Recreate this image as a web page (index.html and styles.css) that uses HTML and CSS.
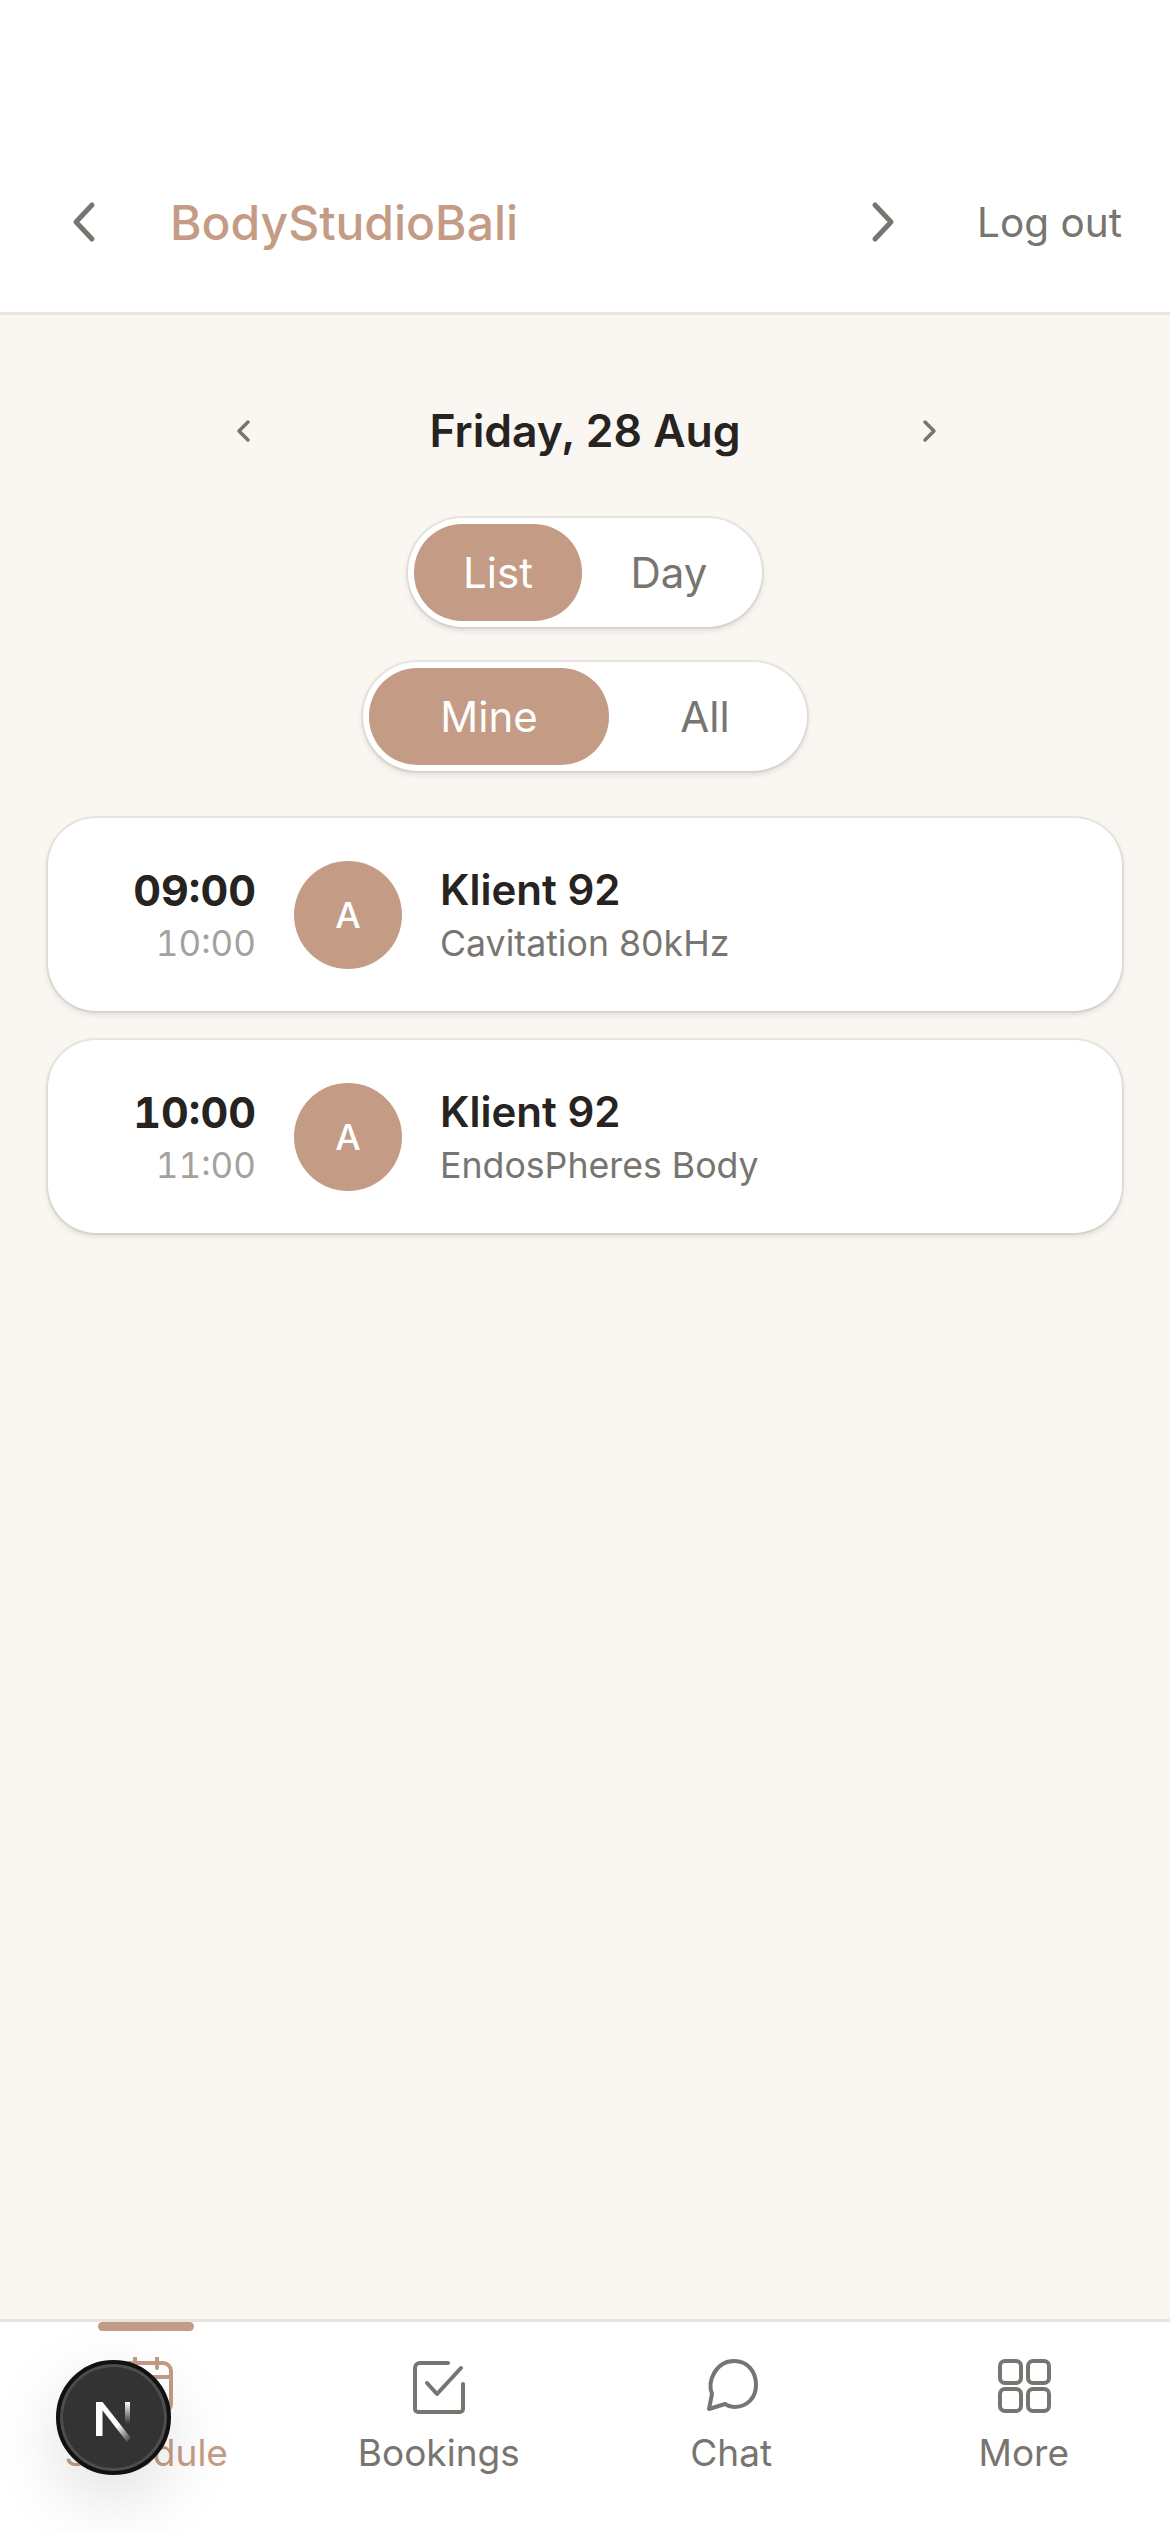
FILE: index.html
```html
<!DOCTYPE html>
<html>
<head>
    <link rel="stylesheet" href="styles.css">
</head>
<body>
    <div class="app">
        <header class="topbar">
            <button class="topbar-arrow">
                <svg width="30" height="42" viewBox="0 0 30 42"><path d="M23 4 7 21l16 17"/></svg>
            </button>
            <div class="brand">BodyStudioBali</div>
            <button class="topbar-arrow">
                <svg width="30" height="42" viewBox="0 0 30 42"><path d="M7 4l16 17L7 38"/></svg>
            </button>
            <a class="logout">Log out</a>
        </header>

        <main class="content">
            <div class="date-row">
                <svg class="date-arrow" width="20" height="26" viewBox="0 0 20 26"><path d="M17 4 8 13l9 9"/></svg>
                <div class="date-label">Friday, 28 Aug</div>
                <svg class="date-arrow" width="20" height="26" viewBox="0 0 20 26"><path d="M6 4l9 9-9 9"/></svg>
            </div>

            <div class="toggle">
                <div class="toggle-item toggle-list active">List</div>
                <div class="toggle-item toggle-day">Day</div>
            </div>
            <div class="toggle">
                <div class="toggle-item toggle-mine active">Mine</div>
                <div class="toggle-item toggle-all">All</div>
            </div>

            <div class="cards">
                <div class="card">
                    <div class="times">
                        <div class="time-start">09:00</div>
                        <div class="time-end">10:00</div>
                    </div>
                    <div class="avatar">A</div>
                    <div class="info">
                        <div class="client">Klient 92</div>
                        <div class="service">Cavitation 80kHz</div>
                    </div>
                </div>
                <div class="card">
                    <div class="times">
                        <div class="time-start">10:00</div>
                        <div class="time-end">11:00</div>
                    </div>
                    <div class="avatar">A</div>
                    <div class="info">
                        <div class="client">Klient 92</div>
                        <div class="service">EndosPheres Body</div>
                    </div>
                </div>
            </div>
        </main>

        <nav class="tabs">
            <div class="tab active">
                <span class="tab-bar"></span>
                <svg width="60" height="60" viewBox="0 0 60 60"><rect x="5" y="6" width="50" height="49" rx="8"/><path d="M19 1v10M41 1v10M5 20h50"/></svg>
                <span class="tab-label">Schedule</span>
            </div>
            <div class="tab">
                <svg width="60" height="60" viewBox="0 0 60 60"><path d="M39 6H11a5 5 0 0 0-5 5v41a3 3 0 0 0 3 3h42a3 3 0 0 0 3-3V27"/><path d="M18 26l10 11 24-26"/></svg>
                <span class="tab-label">Bookings</span>
            </div>
            <div class="tab">
                <svg width="60" height="60" viewBox="0 0 60 60"><path d="M8 52 11 37C6 24 15 4 33 4c14 0 22 11 22 24S46 50 33 50c-4 0-6-1-9-3Z"/></svg>
                <span class="tab-label">Chat</span>
            </div>
            <div class="tab">
                <svg width="60" height="60" viewBox="0 0 60 60"><rect x="6" y="4" width="21" height="22" rx="5"/><rect x="34" y="4" width="21" height="22" rx="5"/><rect x="6" y="32" width="21" height="22" rx="5"/><rect x="34" y="32" width="21" height="22" rx="5"/></svg>
                <span class="tab-label">More</span>
            </div>
        </nav>

        <div class="dev-badge">
            <svg width="60" height="60" viewBox="0 0 60 60">
                <defs>
                    <linearGradient id="nDiag" x1="0" y1="0" x2="1" y2="1">
                        <stop offset="0.6" stop-color="#fff"/>
                        <stop offset="1" stop-color="#fff" stop-opacity="0"/>
                    </linearGradient>
                    <linearGradient id="nRight" x1="0" y1="0" x2="0" y2="1">
                        <stop offset="0" stop-color="#fff"/>
                        <stop offset="1" stop-color="#fff" stop-opacity="0"/>
                    </linearGradient>
                </defs>
                <rect x="12" y="14" width="6.5" height="34" fill="#fff"/>
                <polygon points="12,14 18.5,14 47,50 43,54" fill="url(#nDiag)"/>
                <rect x="41" y="14" width="5" height="22" fill="url(#nRight)"/>
            </svg>
        </div>
    </div>
</body>
</html>
```

FILE: styles.css
```css
* {
    box-sizing: border-box;
}

html,
body {
    margin: 0;
    height: 100%;
}

body {
    font-family: Inter, "Noto Sans", sans-serif;
    color: #262321;
    background: #faf7f2;
}

.app {
    position: relative;
    display: flex;
    flex-direction: column;
    height: 2532px;
    overflow: hidden;
}

/* top bar */
.topbar {
    display: flex;
    align-items: center;
    height: 315px;
    padding: 132px 48px 0 69px;
    background: #fff;
    border-bottom: 3px solid #e8e5e0;
}

.topbar-arrow {
    display: flex;
    padding: 0;
    border: none;
    background: none;
}

.topbar-arrow svg path {
    fill: none;
    stroke: #78746f;
    stroke-width: 5;
    stroke-linecap: round;
    stroke-linejoin: round;
}

.brand {
    flex: 1;
    margin-left: 71px;
    font-size: 48px;
    font-weight: 500;
    color: #c49c86;
}

.logout {
    margin-left: 79px;
    font-size: 40.5px;
    color: #78746f;
}

/* schedule */
.content {
    flex: 1;
    display: flex;
    flex-direction: column;
    align-items: center;
    padding: 0 48px;
}

.date-row {
    display: flex;
    align-items: center;
    justify-content: space-between;
    width: 708px;
    height: 108px;
    margin-top: 62px;
}

.date-arrow path {
    fill: none;
    stroke: #78746f;
    stroke-width: 3.5;
    stroke-linecap: round;
    stroke-linejoin: round;
}

.date-label {
    font-size: 44.5px;
    font-weight: 600;
}

.toggle {
    display: flex;
    height: 109px;
    padding: 6px;
    background: #fff;
    border-radius: 55px;
    box-shadow: 0 3px 6px rgba(60, 50, 40, 0.16), 0 0 0 2px #ebe8e3;
}

.date-row + .toggle {
    margin-top: 33px;
}

.toggle + .toggle {
    margin-top: 35px;
}

.toggle-item {
    display: flex;
    align-items: center;
    justify-content: center;
    font-size: 42px;
    color: #78746f;
    border-radius: 48px;
}

.toggle-item.active {
    color: #fff;
    background: #c49c86;
}

.toggle-list {
    width: 168px;
}

.toggle-day {
    width: 174px;
}

.toggle-mine {
    width: 240px;
}

.toggle-all {
    width: 192px;
}

.cards {
    display: flex;
    flex-direction: column;
    gap: 29px;
    width: 100%;
    margin-top: 47px;
}

.card {
    display: flex;
    align-items: center;
    height: 193px;
    padding: 0 48px;
    background: #fff;
    border-radius: 48px;
    box-shadow: 0 3px 6px rgba(60, 50, 40, 0.16), 0 0 0 2px #ebe8e3;
}

.times {
    width: 160px;
    padding-top: 3px;
    text-align: right;
    font-variant-numeric: tabular-nums;
}

.time-start {
    font-size: 43px;
    font-weight: 650;
    line-height: 54px;
}

.time-end {
    font-size: 35px;
    line-height: 52px;
    color: #a5a19c;
}

.avatar {
    display: flex;
    align-items: center;
    justify-content: center;
    flex-shrink: 0;
    width: 108px;
    height: 108px;
    margin-left: 38px;
    font-size: 36px;
    font-weight: 500;
    color: #fff;
    background: #c49c86;
    border-radius: 50%;
}

.info {
    margin-left: 38px;
    padding-top: 3px;
}

.client {
    font-size: 42px;
    font-weight: 600;
    line-height: 54px;
}

.service {
    font-size: 35.7px;
    line-height: 52px;
    color: #78746f;
}

/* bottom tabs */
.tabs {
    display: grid;
    grid-template-columns: repeat(4, 1fr);
    height: 213px;
    background: #fff;
    border-top: 3px solid #e8e5e0;
}

.tab {
    position: relative;
    display: flex;
    flex-direction: column;
    align-items: center;
    padding-top: 35px;
    color: #78746f;
}

.tab svg {
    fill: none;
    stroke: currentColor;
    stroke-width: 4;
    stroke-linecap: round;
    stroke-linejoin: round;
}

.tab.active {
    color: #c49c86;
}

.tab-bar {
    position: absolute;
    top: 0;
    left: 50%;
    width: 96px;
    height: 9px;
    margin-left: -48px;
    background: #c49c86;
    border-radius: 5px;
}

.tab-label {
    margin-top: 14px;
    font-size: 37px;
    font-weight: 400;
    line-height: 44px;
}

/* dev indicator */
.dev-badge {
    position: absolute;
    left: 56px;
    top: 2360px;
    display: flex;
    align-items: center;
    justify-content: center;
    width: 115px;
    height: 115px;
    background: #333;
    border: 4px solid #111;
    border-radius: 50%;
    box-shadow: inset 0 0 0 3px #4d4d4d, 0 24px 70px rgba(0, 0, 0, 0.13);
}
```
